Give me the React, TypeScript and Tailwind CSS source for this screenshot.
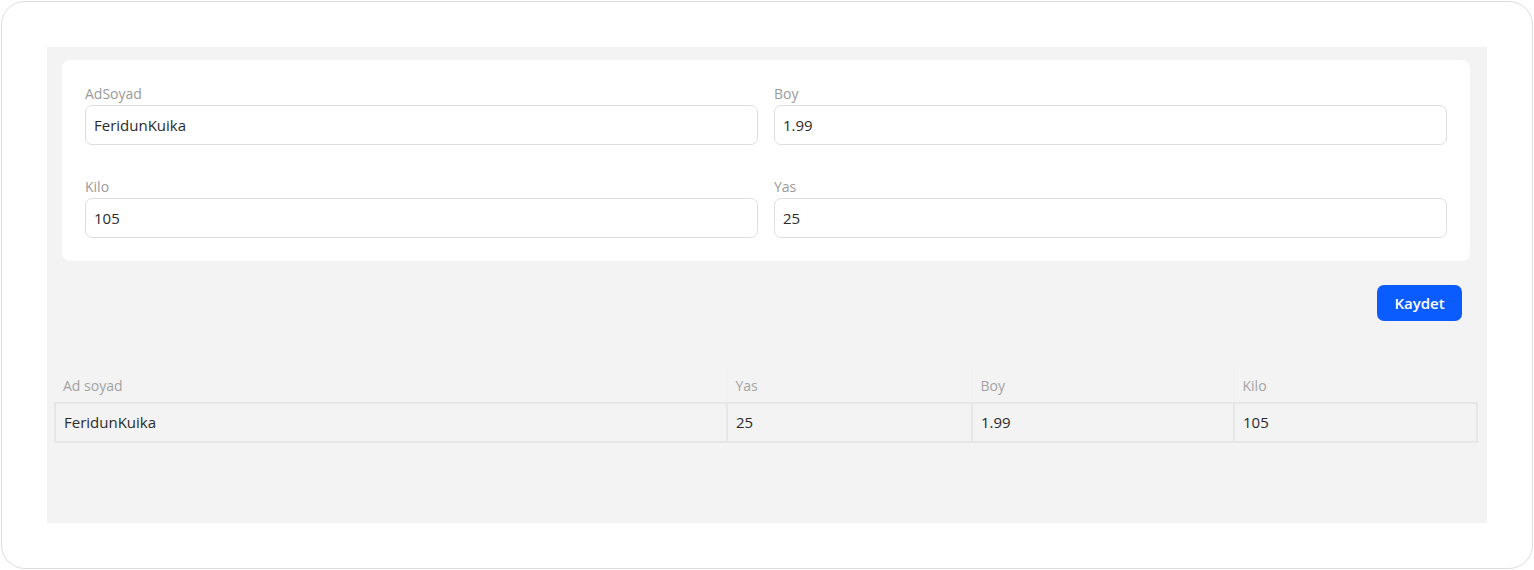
import React from "react";

const font = { fontFamily: '"Open Sans", "Liberation Sans", sans-serif' };

function Field({ label, value }: { label: string; value: string }) {
  return (
    <div className="flex flex-col">
      <label className="text-[14px] leading-[20px] text-[#9a9a9a] mb-[1px]">{label}</label>
      <div className="h-[40px] rounded-[7px] border border-[#dedede] bg-white flex items-center px-[8px] text-[15px] text-[#2b2b2b]">
        {value}
      </div>
    </div>
  );
}

export default function App() {
  return (
    <div className="w-[1534px] h-[570px] bg-white p-[1px]" style={font}>
      <div className="w-full h-full rounded-[24px] border-[1.5px] border-[#dcdde1] bg-white pt-[45px] pl-[45px] pr-[46px] pb-[45px]">
        <div className="w-[1440px] h-[476px] bg-[#f3f3f3] pt-[13px] pl-[7px] pr-[9px]">
          <div className="ml-[8px] mr-[8px] bg-white rounded-[8px] px-[23px] pt-[24px] pb-[23px] grid grid-cols-2 gap-x-[16px] gap-y-[32px]">
            <Field label="AdSoyad" value="FeridunKuika" />
            <Field label="Boy" value="1.99" />
            <Field label="Kilo" value="105" />
            <Field label="Yas" value="25" />
          </div>
          <div className="flex justify-end mt-[24px] pr-[16px]">
            <button className="w-[85px] h-[36px] rounded-[7px] bg-[#0a5cff] text-white text-[15px] font-semibold">
              Kaydet
            </button>
          </div>
          <table className="mt-[47px] w-[1424px] border-collapse text-[15px]">
            <thead>
              <tr className="h-[35px]">
                <th className="w-[672px] text-left font-normal text-[14px] text-[#a3a3a3] pl-[8px]">Ad soyad</th>
                <th className="w-[245px] text-left font-normal text-[14px] text-[#a3a3a3] pl-[8px] border-l border-[#efefef]">Yas</th>
                <th className="w-[262px] text-left font-normal text-[14px] text-[#a3a3a3] pl-[8px] border-l border-[#efefef]">Boy</th>
                <th className="text-left font-normal text-[14px] text-[#a3a3a3] pl-[8px] border-l border-[#efefef]">Kilo</th>
              </tr>
            </thead>
            <tbody>
              <tr className="h-[39px]">
                <td className="border-2 border-[#e6e6e6] pl-[8px] text-[#2b2b2b]">FeridunKuika</td>
                <td className="border-2 border-[#e6e6e6] pl-[8px] text-[#2b2b2b]">25</td>
                <td className="border-2 border-[#e6e6e6] pl-[8px] text-[#2b2b2b]">1.99</td>
                <td className="border-2 border-[#e6e6e6] pl-[8px] text-[#2b2b2b]">105</td>
              </tr>
            </tbody>
          </table>
        </div>
      </div>
    </div>
  );
}
